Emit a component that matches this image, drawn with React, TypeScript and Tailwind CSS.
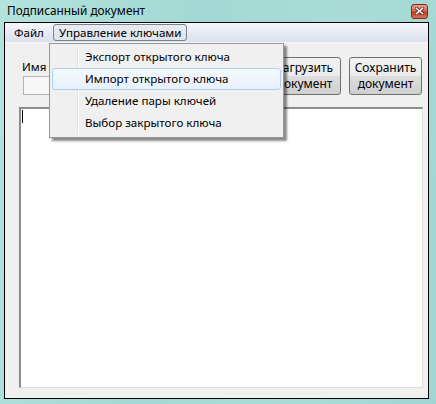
import React from 'react';

const menuItems = [
  'Экспорт открытого ключа',
  'Импорт открытого ключа',
  'Удаление пары ключей',
  'Выбор закрытого ключа',
];

function CloseButton() {
  return (
    <div className="w-[17px] h-[15px] rounded-[3px] border border-[#7a2e1f] bg-[linear-gradient(#e9a08c,#d46a4f_45%,#c0391f_55%,#d9765a)] flex items-center justify-center">
      <svg width="9" height="8" viewBox="0 0 9 8">
        <path d="M1.5 1.5 L7.5 6.5 M7.5 1.5 L1.5 6.5" stroke="#5a2418" strokeWidth="3" strokeLinecap="square" />
        <path d="M1.5 1.5 L7.5 6.5 M7.5 1.5 L1.5 6.5" stroke="#ffffff" strokeWidth="1.6" strokeLinecap="square" />
      </svg>
    </div>
  );
}

function WinButton({ lines }: { lines: string[] }) {
  return (
    <div className="w-[73px] h-[38px] rounded-[3px] border border-[#707070] bg-[linear-gradient(#f2f2f2,#ebebeb_50%,#dddddd_50%,#cfcfcf)] flex flex-col items-center justify-center leading-[16px] text-[12px] text-black">
      {lines.map((l) => (
        <span key={l}>{l}</span>
      ))}
    </div>
  );
}

export default function App() {
  return (
    <div className="relative w-[436px] h-[404px] flex flex-col bg-[linear-gradient(100deg,#b4e3de,#a2d8d3_40%,#a9dcd7_70%,#9fd6d2)] font-['Noto_Sans',sans-serif] text-[11.6px] text-black overflow-hidden">
      <div className="h-[22px] flex items-center justify-between pl-[7px] pr-[8px] shrink-0">
        <span className="text-[11.8px] leading-none">Подписанный документ</span>
        <CloseButton />
      </div>

      <div className="ml-[4px] mr-[7px] mb-[5px] flex-1 flex flex-col border border-black bg-[#f0f0f0]">
        <div className="h-[20px] shrink-0 flex items-center gap-[3px] pl-[3px] bg-[linear-gradient(#f6f7fb,#e4e8f1_60%,#dbe0ec)] border-b border-[#f4f5f8]">
          <span className="px-[6px]">Файл</span>
          <span className="h-[17px] px-[5px] flex items-center rounded-[3px] border border-[#7b8190] bg-[linear-gradient(#e8ebf1,#dfe3ea)]">
            Управление ключами
          </span>
        </div>

        <div className="flex mt-[14px] pl-[17px] shrink-0">
          <div className="flex flex-col w-[246px]">
            <span className="h-[19px] w-[27px] overflow-hidden whitespace-nowrap leading-[19px]">Имя п</span>
            <div className="ml-[1px] h-[19px] w-[238px] border border-[#b4b4b4] bg-[#f7f7f7]" />
          </div>
          <div className="flex gap-[8px]">
            <WinButton lines={['Загрузить', 'документ']} />
            <WinButton lines={['Сохранить', 'документ']} />
          </div>
        </div>

        <div className="flex-1 mt-[12px] ml-[14px] mb-[10px] w-[404px] bg-white border-t-2 border-l-2 border-[#8c8c8c] border-r border-b border-r-[#dcdcdc] border-b-[#dcdcdc] pl-[1px] pt-[1px]">
          <div className="w-[1px] h-[13px] bg-black" />
        </div>
      </div>

      <div className="absolute left-[49px] top-[43px] w-[235px] h-[95px] border border-[#979797] bg-[#f0f0f0] shadow-[3px_3px_2px_rgba(0,0,0,0.45)] p-[2px]">
        <div className="absolute left-[27px] top-[2px] bottom-[2px] w-[2px] border-l border-[#e2e3e3] border-r border-r-white" />
        {menuItems.map((item, i) => (
          <div
            key={item}
            className={
              'relative h-[22px] flex items-center pl-[32px] rounded-[3px] border ' +
              (i === 1
                ? 'border-[#aecff7] bg-[linear-gradient(#f5f9fe,#e8f1fc)]'
                : 'border-transparent')
            }
          >
            {item}
          </div>
        ))}
      </div>
    </div>
  );
}
